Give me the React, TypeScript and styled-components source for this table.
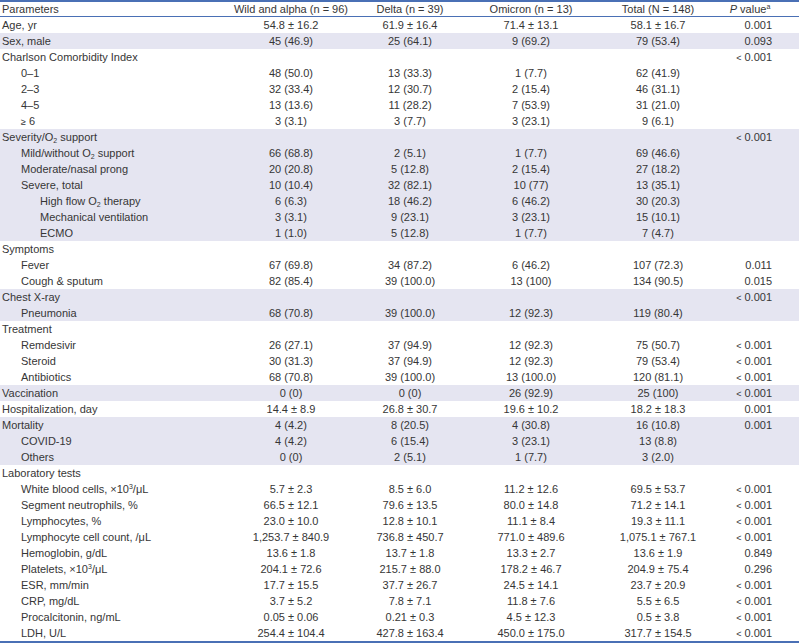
import React from "react";
import styled, { createGlobalStyle } from "styled-components";

const Global = createGlobalStyle`
  html, body { margin: 0; padding: 0; background: #ffffff; }
  body { font-family: "Liberation Sans", Arial, sans-serif; color: #363636; }
`;

const COLS = "232px 118px 120px 122px 132px 52px 1fr";

const Table = styled.div`
  width: 799px;
  display: flex;
  flex-direction: column;
  font-family: "Liberation Sans", Arial, sans-serif;
  font-size: 11px;
  color: #363636;
  border-top: 2px solid #4a70b5;
  border-bottom: 2px solid #4a70b5;
`;

const HeadRow = styled.div`
  display: grid;
  grid-template-columns: ${COLS};
  height: 14px;
  line-height: 14px;
  border-bottom: 1px solid #4a70b5;
`;

const Th = styled.div<{ $align?: "left" | "center" }>`
  padding-left: ${(p) => (p.$align === "left" ? "2px" : "0")};
  text-align: ${(p) => p.$align ?? "center"};
  white-space: nowrap;
`;

const Row = styled.div<{ $shade?: boolean }>`
  display: grid;
  grid-template-columns: ${COLS};
  height: 16px;
  line-height: 16px;
  background: ${(p) => (p.$shade ? "#e5e5f1" : "transparent")};
`;

const Label = styled.div<{ $level: number }>`
  padding-left: ${(p) => 2 + p.$level * 19}px;
  white-space: nowrap;
`;

const Cell = styled.div`
  text-align: center;
  white-space: nowrap;
`;

const PCell = styled.div`
  padding-right: 4px;
  text-align: right;
  white-space: nowrap;
`;

const Sub = styled.sub`
  font-size: 7px;
  line-height: 0;
  vertical-align: -2px;
`;

const Sup = styled.sup`
  font-size: 7px;
  line-height: 0;
  vertical-align: 4px;
`;

const Lt = styled.span`
  font-size: 9px;
`;

const Ital = styled.i`
  font-style: italic;
`;

type RowData = {
  label: React.ReactNode;
  level?: number;
  shade?: boolean;
  v: [string, string, string, string, string];
};

const O2 = (
  <>
    O<Sub>2</Sub>
  </>
);
const e3 = (
  <>
    ×10<Sup>3</Sup>/μL
  </>
);

const rows: RowData[] = [
  { label: "Age, yr", v: ["54.8 ± 16.2", "61.9 ± 16.4", "71.4 ± 13.1", "58.1 ± 16.7", "0.001"] },
  { label: "Sex, male", shade: true, v: ["45 (46.9)", "25 (64.1)", "9 (69.2)", "79 (53.4)", "0.093"] },
  { label: "Charlson Comorbidity Index", v: ["", "", "", "", "< 0.001"] },
  { label: "0–1", level: 1, v: ["48 (50.0)", "13 (33.3)", "1 (7.7)", "62 (41.9)", ""] },
  { label: "2–3", level: 1, v: ["32 (33.4)", "12 (30.7)", "2 (15.4)", "46 (31.1)", ""] },
  { label: "4–5", level: 1, v: ["13 (13.6)", "11 (28.2)", "7 (53.9)", "31 (21.0)", ""] },
  { label: <><Lt>≥</Lt> 6</>, level: 1, v: ["3 (3.1)", "3 (7.7)", "3 (23.1)", "9 (6.1)", ""] },
  { label: <>Severity/{O2} support</>, shade: true, v: ["", "", "", "", "< 0.001"] },
  { label: <>Mild/without {O2} support</>, level: 1, shade: true, v: ["66 (68.8)", "2 (5.1)", "1 (7.7)", "69 (46.6)", ""] },
  { label: "Moderate/nasal prong", level: 1, shade: true, v: ["20 (20.8)", "5 (12.8)", "2 (15.4)", "27 (18.2)", ""] },
  { label: "Severe, total", level: 1, shade: true, v: ["10 (10.4)", "32 (82.1)", "10 (77)", "13 (35.1)", ""] },
  { label: <>High flow {O2} therapy</>, level: 2, shade: true, v: ["6 (6.3)", "18 (46.2)", "6 (46.2)", "30 (20.3)", ""] },
  { label: "Mechanical ventilation", level: 2, shade: true, v: ["3 (3.1)", "9 (23.1)", "3 (23.1)", "15 (10.1)", ""] },
  { label: "ECMO", level: 2, shade: true, v: ["1 (1.0)", "5 (12.8)", "1 (7.7)", "7 (4.7)", ""] },
  { label: "Symptoms", v: ["", "", "", "", ""] },
  { label: "Fever", level: 1, v: ["67 (69.8)", "34 (87.2)", "6 (46.2)", "107 (72.3)", "0.011"] },
  { label: "Cough & sputum", level: 1, v: ["82 (85.4)", "39 (100.0)", "13 (100)", "134 (90.5)", "0.015"] },
  { label: "Chest X-ray", shade: true, v: ["", "", "", "", "< 0.001"] },
  { label: "Pneumonia", level: 1, shade: true, v: ["68 (70.8)", "39 (100.0)", "12 (92.3)", "119 (80.4)", ""] },
  { label: "Treatment", v: ["", "", "", "", ""] },
  { label: "Remdesivir", level: 1, v: ["26 (27.1)", "37 (94.9)", "12 (92.3)", "75 (50.7)", "< 0.001"] },
  { label: "Steroid", level: 1, v: ["30 (31.3)", "37 (94.9)", "12 (92.3)", "79 (53.4)", "< 0.001"] },
  { label: "Antibiotics", level: 1, v: ["68 (70.8)", "39 (100.0)", "13 (100.0)", "120 (81.1)", "< 0.001"] },
  { label: "Vaccination", shade: true, v: ["0 (0)", "0 (0)", "26 (92.9)", "25 (100)", "< 0.001"] },
  { label: "Hospitalization, day", v: ["14.4 ± 8.9", "26.8 ± 30.7", "19.6 ± 10.2", "18.2 ± 18.3", "0.001"] },
  { label: "Mortality", shade: true, v: ["4 (4.2)", "8 (20.5)", "4 (30.8)", "16 (10.8)", "0.001"] },
  { label: "COVID-19", level: 1, shade: true, v: ["4 (4.2)", "6 (15.4)", "3 (23.1)", "13 (8.8)", ""] },
  { label: "Others", level: 1, shade: true, v: ["0 (0)", "2 (5.1)", "1 (7.7)", "3 (2.0)", ""] },
  { label: "Laboratory tests", v: ["", "", "", "", ""] },
  { label: <>White blood cells, {e3}</>, level: 1, v: ["5.7 ± 2.3", "8.5 ± 6.0", "11.2 ± 12.6", "69.5 ± 53.7", "< 0.001"] },
  { label: "Segment neutrophils, %", level: 1, v: ["66.5 ± 12.1", "79.6 ± 13.5", "80.0 ± 14.8", "71.2 ± 14.1", "< 0.001"] },
  { label: "Lymphocytes, %", level: 1, v: ["23.0 ± 10.0", "12.8 ± 10.1", "11.1 ± 8.4", "19.3 ± 11.1", "< 0.001"] },
  { label: "Lymphocyte cell count, /μL", level: 1, v: ["1,253.7 ± 840.9", "736.8 ± 450.7", "771.0 ± 489.6", "1,075.1 ± 767.1", "< 0.001"] },
  { label: "Hemoglobin, g/dL", level: 1, v: ["13.6 ± 1.8", "13.7 ± 1.8", "13.3 ± 2.7", "13.6 ± 1.9", "0.849"] },
  { label: <>Platelets, {e3}</>, level: 1, v: ["204.1 ± 72.6", "215.7 ± 88.0", "178.2 ± 46.7", "204.9 ± 75.4", "0.296"] },
  { label: "ESR, mm/min", level: 1, v: ["17.7 ± 15.5", "37.7 ± 26.7", "24.5 ± 14.1", "23.7 ± 20.9", "< 0.001"] },
  { label: "CRP, mg/dL", level: 1, v: ["3.7 ± 5.2", "7.8 ± 7.1", "11.8 ± 7.6", "5.5 ± 6.5", "< 0.001"] },
  { label: "Procalcitonin, ng/mL", level: 1, v: ["0.05 ± 0.06", "0.21 ± 0.3", "4.5 ± 12.3", "0.5 ± 3.8", "< 0.001"] },
  { label: "LDH, U/L", level: 1, v: ["254.4 ± 104.4", "427.8 ± 163.4", "450.0 ± 175.0", "317.7 ± 154.5", "< 0.001"] },
];

const renderP = (s: string) =>
  s.startsWith("<") ? (
    <>
      <Lt>&lt;</Lt> {s.slice(2)}
    </>
  ) : (
    s
  );

export default function App() {
  return (
    <>
      <Global />
      <Table>
        <HeadRow>
          <Th $align="left">Parameters</Th>
          <Th>Wild and alpha (n = 96)</Th>
          <Th>Delta (n = 39)</Th>
          <Th>Omicron (n = 13)</Th>
          <Th>Total (N = 148)</Th>
          <Th>
            <Ital>P</Ital> value<Sup>a</Sup>
          </Th>
          <Th />
        </HeadRow>
        {rows.map((r, i) => (
          <Row key={i} $shade={r.shade}>
            <Label $level={r.level ?? 0}>{r.label}</Label>
            <Cell>{r.v[0]}</Cell>
            <Cell>{r.v[1]}</Cell>
            <Cell>{r.v[2]}</Cell>
            <Cell>{r.v[3]}</Cell>
            <PCell>{renderP(r.v[4])}</PCell>
            <Cell />
          </Row>
        ))}
      </Table>
    </>
  );
}
